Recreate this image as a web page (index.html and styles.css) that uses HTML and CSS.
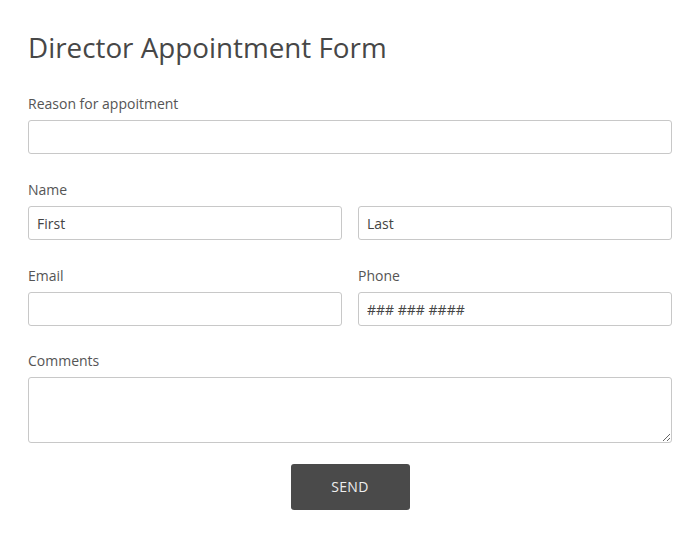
FILE: index.html
```html
<!DOCTYPE html>
<html>
<head>
<meta charset="utf-8">
<link rel="stylesheet" href="styles.css">
</head>
<body>
<form class="form">
  <h1 class="title">Director Appointment Form</h1>
  <div class="field">
    <label class="label">Reason for appoitment</label>
    <input class="input" type="text">
  </div>
  <div class="field">
    <label class="label">Name</label>
    <div class="row">
      <input class="input" type="text" placeholder="First">
      <input class="input" type="text" placeholder="Last">
    </div>
  </div>
  <div class="row">
    <div class="field">
      <label class="label">Email</label>
      <input class="input" type="text">
    </div>
    <div class="field">
      <label class="label">Phone</label>
      <input class="input" type="text" placeholder="### ### ####">
    </div>
  </div>
  <div class="field field-last">
    <label class="label">Comments</label>
    <textarea class="input textarea"></textarea>
  </div>
  <div class="actions">
    <button class="send" type="button">SEND</button>
  </div>
</form>
</body>
</html>
```
FILE: styles.css
```css
* { box-sizing: border-box; }
html, body { margin: 0; padding: 0; background: #fff; }
body {
  font-family: "Open Sans", "Liberation Sans", sans-serif;
  color: #555;
}
.form {
  padding: 29px 28px 0 28px;
  display: flex;
  flex-direction: column;
}
.title {
  margin: 0 0 28px 0;
  font-size: 27.8px;
  line-height: 36px;
  font-weight: 400;
  color: #474747;
}
.field {
  display: flex;
  flex-direction: column;
  margin-bottom: 25px;
}
.field-last { margin-bottom: 21px; }
.row {
  display: grid;
  grid-template-columns: 1fr 1fr;
  column-gap: 16px;
}
.row > .field { margin-bottom: 24px; }
.field > .row { margin: 0; }
.label {
  font-size: 14px;
  line-height: 20px;
  padding-top: 1px;
  margin-bottom: 6px;
  color: #555;
}
.input {
  display: block;
  width: 100%;
  height: 34px;
  border: 1px solid #c8c8c8;
  border-radius: 3px;
  padding: 0 8px;
  font-family: "Open Sans", "Liberation Sans", sans-serif;
  font-size: 14px;
  color: #444;
  background: #fff;
  outline: none;
}
.input::placeholder { color: #444; opacity: 1; }
.textarea {
  height: 66px;
  resize: vertical;
  padding: 8px;
}
.actions {
  display: flex;
  justify-content: center;
}
.send {
  width: 119px;
  height: 46px;
  padding: 0 0 2px 0;
  background: #4a4a4a;
  color: #eee;
  border: none;
  border-radius: 3px;
  font-family: "Open Sans", "Liberation Sans", sans-serif;
  font-size: 14px;
  letter-spacing: 0.3px;
}
```
